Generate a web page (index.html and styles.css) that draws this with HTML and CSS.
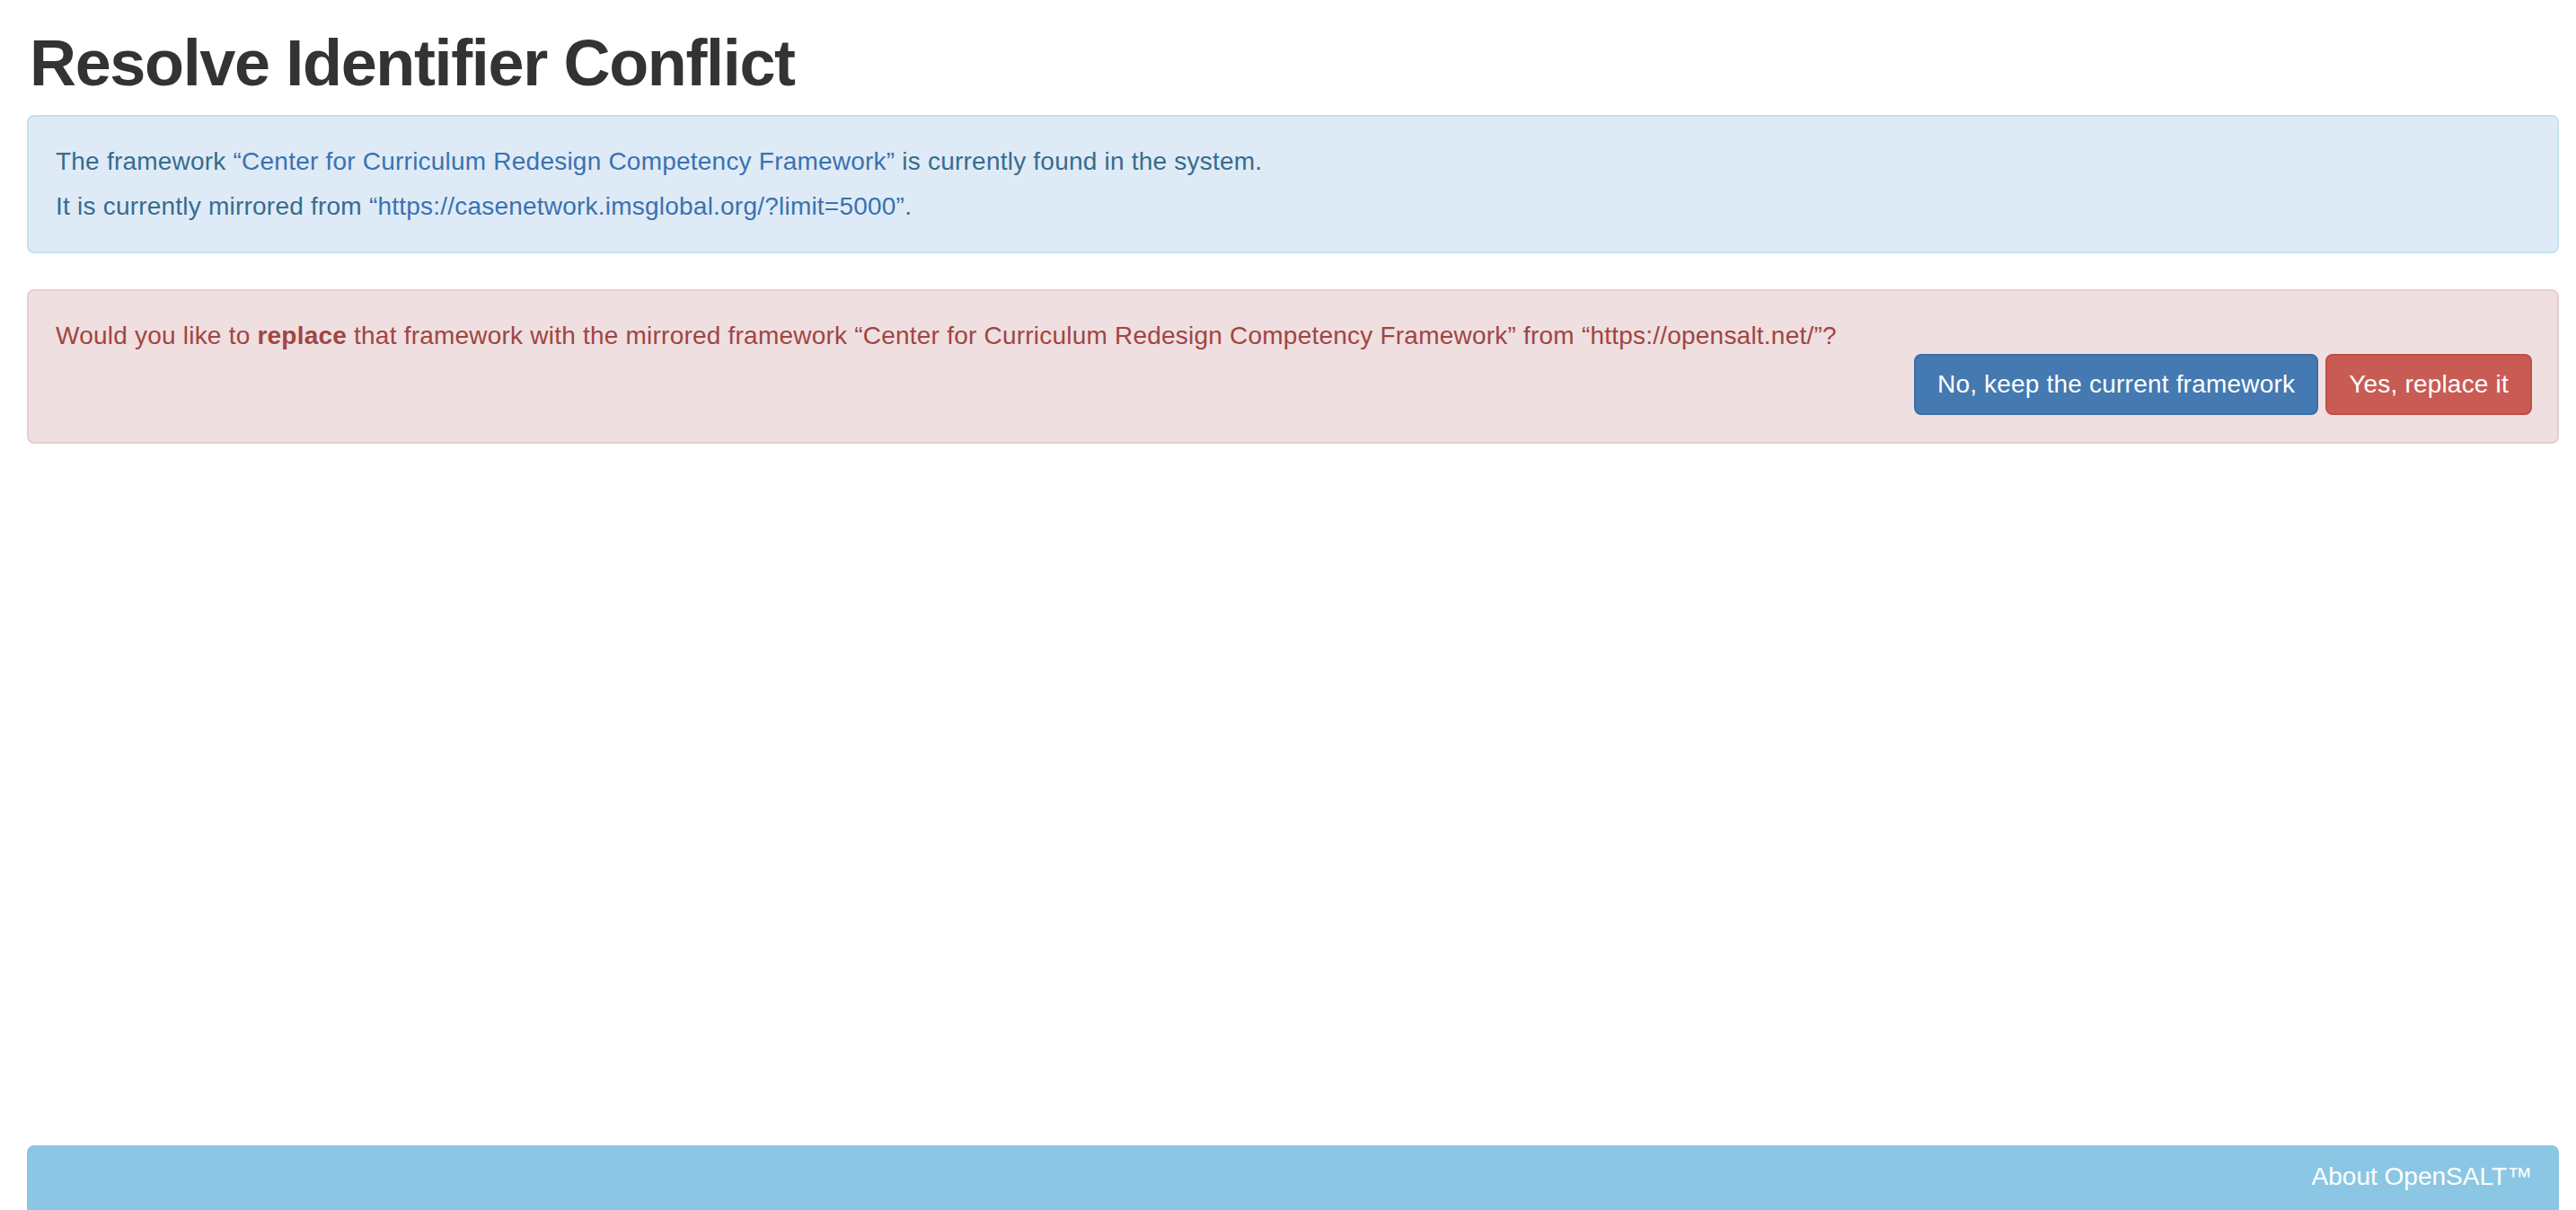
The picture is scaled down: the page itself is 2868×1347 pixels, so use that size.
FILE: index.html
```html
<!DOCTYPE html>
<html lang="en">
<head>
<meta charset="utf-8">
<title>Resolve Identifier Conflict</title>
<link rel="stylesheet" href="styles.css">
</head>
<body>
<div class="page">
  <main class="content">
    <h1 class="title">Resolve Identifier Conflict</h1>
    <div class="alert alert-info">
      <p>The framework <a class="link" href="#">“Center for Curriculum Redesign Competency Framework”</a> is currently found in the system.</p>
      <p>It is currently mirrored from <a class="link" href="#">“https://casenetwork.imsglobal.org/?limit=5000”</a>.</p>
    </div>
    <div class="alert alert-danger">
      <p>Would you like to <strong>replace</strong> that framework with the mirrored framework “Center for Curriculum Redesign Competency Framework” from “https://opensalt.net/”?</p>
      <div class="actions">
        <button class="btn btn-primary" type="button">No, keep the current framework</button>
        <button class="btn btn-danger" type="button">Yes, replace it</button>
      </div>
    </div>
  </main>
  <footer class="footer">
    <a class="footer-link" href="#">About OpenSALT™</a>
  </footer>
</div>
</body>
</html>
```

FILE: styles.css
```css
html, body {
  margin: 0;
  padding: 0;
  background: #ffffff;
}

body {
  font-family: "Liberation Sans", Arial, sans-serif;
  font-size: 28px;
  line-height: 40px;
  letter-spacing: 0.22px;
  color: #333333;
}

.page {
  display: flex;
  flex-direction: column;
  padding: 0 19px 0 30px;
}

.content {
  min-height: 1275px;
}

.title {
  margin: 31px 0 18px 3px;
  font-size: 72px;
  line-height: 79px;
  font-weight: bold;
  color: #333333;
  letter-spacing: -1.35px;
}

.alert {
  border: 2px solid transparent;
  border-radius: 8px;
  padding: 30px;
  margin-bottom: 40px;
}

.alert p {
  margin: 0;
}

.alert p + p {
  margin-top: 10px;
}

.alert-info {
  background: #deebf6;
  border-color: #c3e2ee;
  color: #386b8e;
}

.link {
  color: #3a72b1;
  text-decoration: none;
}

.alert-danger {
  background: #efdfe0;
  border-color: #e8cdd2;
  color: #a14542;
}

.alert-danger strong {
  font-weight: bold;
}

.actions {
  display: flex;
  justify-content: flex-end;
  gap: 8px;
  margin-right: -2px;
}

.btn {
  font-family: "Liberation Sans", Arial, sans-serif;
  font-size: 28px;
  line-height: 40px;
  letter-spacing: 0.2px;
  padding: 12px 24px;
  border: 2px solid transparent;
  border-radius: 8px;
  color: #ffffff;
  cursor: pointer;
}

.btn-primary {
  background: #4479b1;
  border-color: #3b6ea6;
}

.btn-danger {
  background: #c85c55;
  border-color: #c24c45;
}

.footer {
  background: #8bc7e4;
  border-radius: 8px 8px 0 0;
  height: 100px;
  display: flex;
  justify-content: flex-end;
  align-items: flex-start;
  padding: 15px 30px 0 30px;
  box-sizing: border-box;
}

.footer-link {
  color: #ffffff;
  text-decoration: none;
  font-size: 28px;
  line-height: 40px;
  letter-spacing: 0;
}
```
